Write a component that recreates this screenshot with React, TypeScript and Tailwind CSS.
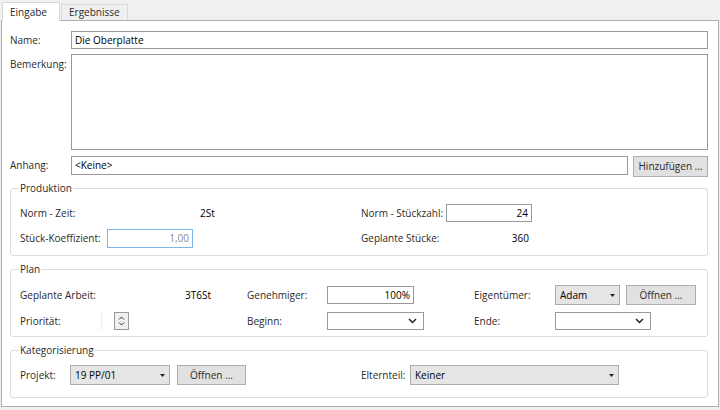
import React from "react";

const Chevron = () => (
  <svg width="9" height="6" viewBox="0 0 9 6">
    <path d="M1 1l3.5 3.5L8 1" fill="none" stroke="#222" strokeWidth="1.5" />
  </svg>
);

const Arrow = () => (
  <svg width="5" height="3" viewBox="0 0 5 3">
    <path d="M0 0h5L2.5 3z" fill="#222" />
  </svg>
);

const TextBox = ({ w, value, right, className = "" }: { w: string; value?: string; right?: boolean; className?: string }) => (
  <div className={`${w} h-[18px] border border-[#999] bg-white flex items-center ${right ? "justify-end pr-[3px]" : "pl-[3px]"} ${className}`}>
    {value}
  </div>
);

const DateBox = ({ w }: { w: string }) => (
  <div className={`${w} h-[18px] border border-[#999] bg-white flex items-center justify-end pr-[6px]`}>
    <Chevron />
  </div>
);

const Combo = ({ w, value }: { w: string; value: string }) => (
  <div className={`${w} h-[20px] border border-[#acacac] bg-[#e5e5e5] flex items-center justify-between pl-[4px] pr-[4px] text-black`}>
    <span>{value}</span>
    <Arrow />
  </div>
);

const Btn = ({ w, label, className = "" }: { w: string; label: string; className?: string }) => (
  <div className={`${w} h-[20px] border border-[#adadad] bg-[#e1e1e1] flex items-center justify-center ${className}`}>{label}</div>
);

const Group = ({ title, className, children }: { title: string; className: string; children: React.ReactNode }) => (
  <fieldset className={`border border-[#d5dfe5] rounded-[3px] px-[9px] ${className}`}>
    <legend className="-ml-[1px] px-[1px] leading-[13px]">{title}</legend>
    {children}
  </fieldset>
);

export default function App() {
  return (
    <div className="w-[720px] h-[410px] bg-[#f0f0f0] font-['Open_Sans',sans-serif] text-[10px] text-[#2a2a2a] overflow-hidden">
      {/* tabs */}
      <div className="h-[20px] flex items-end pl-[2px]">
        <div className="relative z-10 -mb-[1px] w-[58px] h-[19px] bg-white border border-b-0 border-[#d9d9d9] pl-[7px] flex items-center">Eingabe</div>
        <div className="w-[67px] h-[16px] border border-b-0 border-[#d9d9d9] bg-[#f0f0f0] pl-[7px] flex items-center ml-[1px]">Ergebnisse</div>
      </div>

      {/* panel */}
      <div className="ml-[1px] w-[718px] h-[387px] bg-white border border-[#adadad] pl-[8px] pr-[10px] pt-[10px] flex flex-col">
        <div className="flex items-center h-[18px]">
          <span className="w-[61px]">Name:</span>
          <TextBox w="flex-1" value="Die Oberplatte" className="text-black" />
        </div>
        <div className="flex items-start mt-[5px]">
          <span className="w-[61px] pt-[3px]">Bemerkung:</span>
          <div className="flex-1 h-[96px] border border-[#999] bg-white" />
        </div>
        <div className="flex items-start mt-[6px]">
          <span className="w-[61px] h-[19px] flex items-center">Anhang:</span>
          <div className="flex-1 h-[19px] border border-[#999] bg-white flex items-center pl-[3px] text-black">&lt;Keine&gt;</div>
          <Btn w="w-[75px]" label="Hinzufügen ..." className="ml-[5px] h-[21px]" />
        </div>

        <Group title="Produktion" className="mt-[5px] pt-[9px] pb-[7px]">
          <div className="flex">
            <div className="w-[341px] flex flex-col gap-[7px]">
              <div className="flex items-center h-[18px]">
                <span className="w-[180px]">Norm - Zeit:</span>
                <span className="text-black">2St</span>
              </div>
              <div className="flex items-center h-[19px]">
                <span className="w-[87px]">Stück-Koeffizient:</span>
                <div className="w-[86px] h-[19px] border border-[#7eb4ea] bg-white flex items-center justify-end pr-[3px] text-[#8a8a8a]">1,00</div>
              </div>
            </div>
            <div className="flex flex-col gap-[7px]">
              <div className="flex items-center h-[18px]">
                <span className="w-[85px]">Norm - Stückzahl:</span>
                <TextBox w="w-[86px]" value="24" right className="text-black" />
              </div>
              <div className="flex items-center h-[19px]">
                <span className="w-[85px]">Geplante Stücke:</span>
                <span className="w-[83px] text-right text-black">360</span>
              </div>
            </div>
          </div>
        </Group>

        <Group title="Plan" className="mt-[7px] pt-[9px] pb-[6px]">
          <div className="flex items-center h-[20px]">
            <div className="w-[227px] flex items-center">
              <span className="w-[165px]">Geplante Arbeit:</span>
              <span className="text-black">3T6St</span>
            </div>
            <div className="w-[227px] flex items-center">
              <span className="w-[80px]">Genehmiger:</span>
              <TextBox w="w-[87px]" value="100%" right className="text-black" />
            </div>
            <div className="flex items-center">
              <span className="w-[81px]">Eigentümer:</span>
              <Combo w="w-[65px]" value="Adam" />
              <Btn w="w-[70px]" label="Öffnen ..." className="ml-[6px]" />
            </div>
          </div>
          <div className="flex items-center h-[18px] mt-[7px]">
            <div className="w-[227px] flex items-center">
              <span className="w-[81px]">Priorität:</span>
              <div className="flex h-[18px] w-[28px]">
                <div className="w-[13px] h-full bg-white border-l border-[#ececec]" />
                <div className="w-[15px] h-full border border-[#999] bg-[#f0f0f0] flex flex-col items-center justify-center gap-[2px]">
                  <svg width="7" height="4" viewBox="0 0 7 4"><path d="M1 3.5l2.5-2.5L6 3.5" fill="none" stroke="#333" strokeWidth="1" /></svg>
                  <svg width="7" height="4" viewBox="0 0 7 4"><path d="M1 0.5l2.5 2.5L6 0.5" fill="none" stroke="#333" strokeWidth="1" /></svg>
                </div>
              </div>
            </div>
            <div className="w-[227px] flex items-center">
              <span className="w-[80px]">Beginn:</span>
              <DateBox w="w-[97px]" />
            </div>
            <div className="flex items-center">
              <span className="w-[81px]">Ende:</span>
              <DateBox w="w-[96px]" />
            </div>
          </div>
        </Group>

        <Group title="Kategorisierung" className="mt-[7px] pt-[8px] pb-[12px]">
          <div className="flex items-center h-[20px]">
            <div className="w-[341px] flex items-center">
              <span className="w-[50px]">Projekt:</span>
              <Combo w="w-[100px]" value="19 PP/01" />
              <Btn w="w-[69px]" label="Öffnen ..." className="ml-[7px]" />
            </div>
            <span className="w-[49px]">Elternteil:</span>
            <Combo w="w-[209px]" value="Keiner" />
          </div>
        </Group>
      </div>
    </div>
  );
}
